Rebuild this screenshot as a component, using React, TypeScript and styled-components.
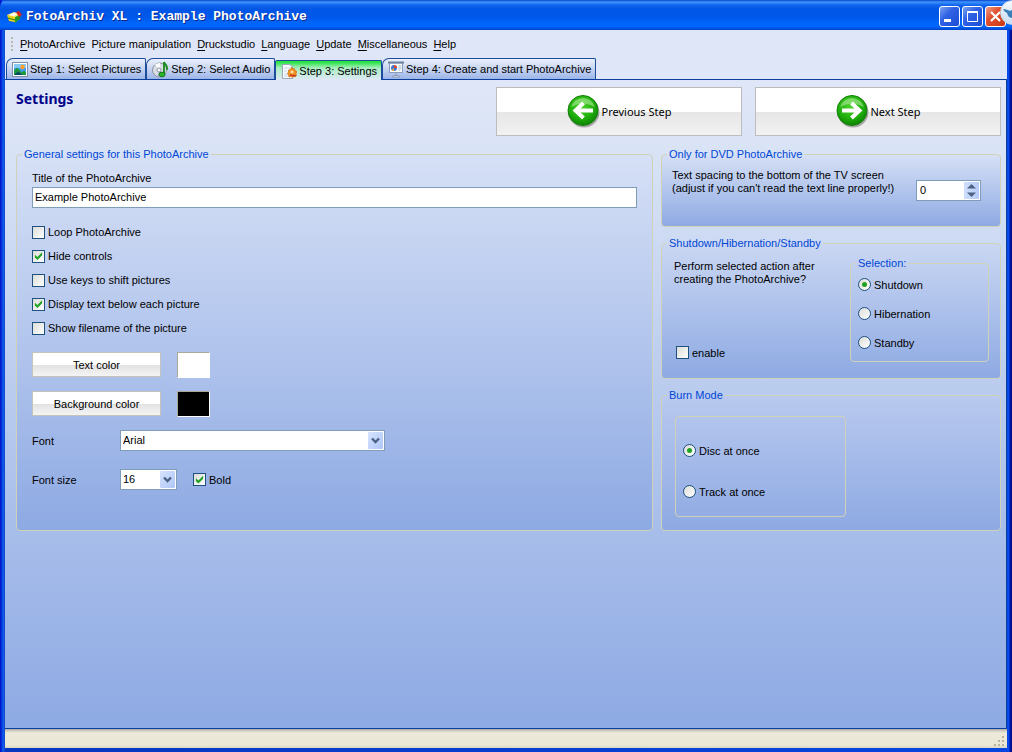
import React, { useState } from 'react';
import styled, { createGlobalStyle, css } from 'styled-components';

const Global = createGlobalStyle`
  * { box-sizing: border-box; }
  body { margin: 0; background: #0831d9; }
  body, button, input, select {
    font-family: 'Liberation Sans', Arial, sans-serif;
    font-size: 11px;
    line-height: 14px;
    color: #000;
  }
  button { padding: 0; cursor: default; }
`;

const Window = styled.div`
  display: flex;
  flex-direction: column;
  min-height: 100vh;
  padding: 0 5px 4px;
  position: relative;
  overflow: hidden;
  background: linear-gradient(90deg, #0019cf 0, #0019cf 1px, #0846e0 2px, #1560ea 4px, #0837c0 5px, #0846e0 calc(100% - 5px), #0650f0 calc(100% - 3px), #0010a0 calc(100% - 2px), #00138c 100%);
`;

const TitleBar = styled.header`
  display: flex;
  align-items: center;
  gap: 3px;
  height: 30px;
  margin: 0 -5px;
  padding: 3px 6px 0;
  border-radius: 7px 0 0 0;
  background: linear-gradient(#0842c8 0, #3f96ff 2px, #1265ee 5px, #0056e5 9px, #0058ea 17px, #0066fa 23px, #0068ff 26px, #0050dd 29px, #0640bb 30px);
`;

const Title = styled.h1`
  flex: 1;
  margin: 0;
  color: #fff;
  font: bold 13px/16px 'Liberation Mono', 'Courier New', monospace;
  text-shadow: 1px 1px 0 #0b2a8c;
`;

const Captions = styled.div`
  display: flex;
  gap: 2px;
`;

const CaptionButton = styled.button<{ $close?: boolean }>`
  width: 21px;
  height: 21px;
  border: 1px solid #fff;
  border-radius: 3px;
  background: ${p => p.$close
    ? 'linear-gradient(135deg, #f0a088, #e05030 40%, #c83810)'
    : 'linear-gradient(135deg, #7ba2f0, #2f62e4 40%, #1c4cd6)'};
  svg { display: block; }
`;

const Bubble = styled.div`
  position: absolute;
  top: 0;
  right: -13px;
  width: 25px;
  height: 25px;
  border-radius: 13px;
  border: 1px solid #c4d6ec;
  background: linear-gradient(#f6faff, #c9dcf2);
  svg { display: block; }
`;

const MenuBar = styled.nav`
  display: flex;
  align-items: center;
  gap: 6px;
  height: 28px;
  padding-left: 6px;
  background: #dfe6f7;
`;

const Grip = styled.span`
  width: 2px;
  height: 14px;
  margin-right: 1px;
  background: repeating-linear-gradient(#b8b8b0 0, #b8b8b0 2px, transparent 2px, transparent 4px);
`;

const MenuItem = styled.button`
  border: 0;
  background: none;
  white-space: nowrap;
  text-underline-offset: 2px;
`;

const TabStrip = styled.div`
  display: flex;
  align-items: flex-end;
  height: 22px;
  padding-left: 1px;
  background: #dfe6f7;
  border-bottom: 1px solid #0c3f9c;
`;

const Tab = styled.button<{ $active?: boolean }>`
  display: flex;
  align-items: center;
  gap: 2px;
  height: 21px;
  padding: 0 4px 0 5px;
  border: 1px solid #1c4c9c;
  border-bottom: 0;
  border-radius: 7px 2px 0 0;
  white-space: nowrap;
  background: linear-gradient(#eaf0fb, #c6d4f1 50%, #9cb5e8);
  ${p => p.$active && css`
    height: 20px;
    margin-bottom: -1px;
    padding: 1px 4px 0 5px;
    border-radius: 2px 2px 0 0;
    background: linear-gradient(#19e832 0, #3be455 2px, #a9eec0 7px, #dfe8f6 19px);
  `}
  svg { display: block; flex: none; }
`;

const Page = styled.main`
  flex: 1;
  padding: 7px 5px 16px 11px;
  border-right: 1px solid #0c3f9c;
  background: linear-gradient(#dfe6f7 0, #dae4f6 60px, #8eaae4 100%);
`;

const PageHead = styled.div`
  display: flex;
  align-items: flex-start;
  gap: 13px;
  margin-bottom: 11px;
`;

const Heading = styled.h2`
  flex: 1;
  margin: 0;
  padding-top: 3px;
  color: #00008b;
  font: bold 14px/18px 'Noto Sans', Tahoma, sans-serif;
`;

const StepButton = styled.button`
  display: flex;
  align-items: center;
  justify-content: center;
  gap: 2px;
  width: 246px;
  height: 49px;
  border: 1px solid #bdbdbd;
  background: linear-gradient(#fff 0, #fff 51%, #e6e6e6 52%, #f2f2f2 100%);
  font: 11px/14px 'Noto Sans', Tahoma, sans-serif;
`;

const Columns = styled.div`
  display: grid;
  grid-template-columns: minmax(0, 15fr) minmax(340px, 8fr);
  gap: 8px;
`;

const Stack = styled.div`
  display: flex;
  flex-direction: column;
  gap: 9px;
`;

const Legend = styled.legend`
  margin-left: -10px;
  padding: 0 2px;
  height: 14px;
  color: #0046d5;
`;

const Group = styled.fieldset<{ $h?: number; $top?: string }>`
  min-width: 0;
  margin: 0;
  min-height: ${p => p.$h ?? 0}px;
  padding: 0 15px;
  border: 1px solid #d0d2b8;
  border-radius: 4px;
  background: ${p => p.$top ? `linear-gradient(${p.$top}, #8eaae3)` : 'none'};
`;

const FieldLabel = styled.label`
  display: block;
  margin-top: 9px;
  padding-bottom: 1px;
  line-height: 16px;
`;

const fieldBox = css`
  height: 21px;
  border: 1px solid #7f9db9;
  border-radius: 0;
  background: #fff;
  outline: 0;
`;

const TextInput = styled.input`
  ${fieldBox}
  display: block;
  width: 100%;
  padding: 0 2px 1px;
`;

const CheckList = styled.div`
  display: flex;
  flex-direction: column;
  margin: 12px 0;
`;

const Option = styled.label<{ $row?: number }>`
  display: flex;
  align-items: center;
  gap: 3px;
  height: ${p => p.$row ?? 24}px;
  white-space: nowrap;
`;

const Check = styled.input.attrs({ type: 'checkbox' })`
  appearance: none;
  display: grid;
  place-items: center;
  width: 13px;
  height: 13px;
  margin: 0;
  border: 1px solid #1c5180;
  background: linear-gradient(135deg, #dcdcd7, #fff);
  &:checked::before {
    content: '';
    width: 9px;
    height: 9px;
    background: #21a121;
    clip-path: polygon(10% 35%, 38% 60%, 90% 8%, 90% 42%, 38% 95%, 10% 68%);
  }
`;

const Radio = styled.input.attrs({ type: 'radio' })`
  appearance: none;
  display: grid;
  place-items: center;
  width: 13px;
  height: 13px;
  margin: 0;
  border: 1px solid #1c5180;
  border-radius: 50%;
  background: linear-gradient(135deg, #dcdcd7, #fff);
  &:checked::before {
    content: '';
    width: 5px;
    height: 5px;
    border-radius: 50%;
    background: #21a121;
  }
`;

const ColorRow = styled.div`
  display: flex;
  gap: 16px;
  height: 26px;
  margin-bottom: 13px;
`;

const ColorButton = styled.button`
  width: 129px;
  height: 25px;
  border: 1px solid #c6c3bd;
  background: linear-gradient(#fff 0, #fff 50%, #e2e2e2 52%, #f4f4f4 100%);
`;

const Swatch = styled.span<{ $color: string }>`
  width: 33px;
  height: 26px;
  border: 1px solid;
  border-color: #aca899 #fff #fff #aca899;
  background: ${p => p.$color};
`;

const FormRow = styled.div`
  display: flex;
  align-items: center;
  height: 21px;
  margin-bottom: 18px;
`;

const RowLabel = styled.label`
  width: 88px;
`;

const SelectBox = styled.span<{ $w: number }>`
  position: relative;
  width: ${p => p.$w}px;
  margin-right: 16px;
  svg { position: absolute; top: 2px; right: 2px; pointer-events: none; }
`;

const Select = styled.select`
  ${fieldBox}
  appearance: none;
  display: block;
  width: 100%;
  padding: 0 20px 1px 2px;
`;

const SplitRow = styled.div`
  display: flex;
  justify-content: space-between;
`;

const Note = styled.p`
  margin: 0;
  line-height: 13px;
  white-space: nowrap;
`;

const DvdRow = styled(SplitRow)`
  padding: 8px 4px 0 0;
  margin-left: -5px;
`;

const Spinner = styled.div`
  ${fieldBox}
  display: flex;
  width: 65px;
  margin-top: 11px;
  padding: 1px;
`;

const SpinInput = styled.input`
  flex: 1;
  min-width: 0;
  padding: 0 0 1px 2px;
  border: 0;
  outline: 0;
  appearance: textfield;
  &::-webkit-inner-spin-button { appearance: none; }
`;

const SpinButtons = styled.div`
  display: flex;
  flex-direction: column;
  width: 15px;
  button {
    flex: 1;
    border: 0;
    background: linear-gradient(90deg, #cfdefd, #b5cbf8);
  }
  svg { display: block; margin: 0 auto; }
`;

const ActionColumn = styled.div`
  display: flex;
  flex-direction: column;
  justify-content: space-between;
  height: 109px;
  padding-top: 10px;
  margin-left: -3px;
  label { padding-left: 2px; }
`;

const SelectionGroup = styled(Group)`
  width: 139px;
  margin: 6px -4px 0 0;
  padding: 0 7px 4px;
  legend { margin-left: -2px; }
`;

const BurnGroup = styled(Group)`
  width: 171px;
  margin: 14px 0 0 -2px;
  padding: 13px 7px 4px;
`;

const StatusBar = styled.footer`
  display: flex;
  justify-content: flex-end;
  align-items: flex-end;
  height: 20px;
  border-top: 1px solid #0c3f9c;
  background: linear-gradient(#a9a7a6 0, #d6d3c6 2px, #ebe9d8 4px, #ebe8d6 16px, #d9d6c4 19px);
`;

const DropArrow = () => (
  <svg width="15" height="17" viewBox="0 0 15 17">
    <defs>
      <linearGradient id="drop" x1="0" y1="0" x2="1" y2="1">
        <stop offset="0" stopColor="#d6e3fe" />
        <stop offset="1" stopColor="#aec6f7" />
      </linearGradient>
    </defs>
    <rect width="15" height="17" rx="1" fill="url(#drop)" />
    <path d="M4 6.5 7.5 10 11 6.5" fill="none" stroke="#4d6185" strokeWidth="2.4" />
  </svg>
);

const AppIcon = () => (
  <svg width="17" height="16" viewBox="0 0 17 16">
    <path d="M1 6 8 3l6 2-5 4z" fill="#fff27a" />
    <path d="M1 6l8 2v5l-6-1z" fill="#f3cf13" />
    <path d="M9 8l6-3-1 5-5 4z" fill="#28a52c" />
    <path d="M10 3l3-1 3 4-3 2z" fill="#d9251b" />
    <path d="M3 6l5-2 3 1-3 2z" fill="#fff" />
    <path d="M2 9l7 2 5-3" stroke="#168320" fill="none" />
  </svg>
);

const PictureIcon = () => (
  <svg width="16" height="16" viewBox="0 0 16 16">
    <rect x=".5" y="1.5" width="15" height="14" fill="#fff" stroke="#7f90a8" />
    <rect x="2" y="3" width="12" height="11" fill="#3f9fee" />
    <path d="M2 3h12v4H2z" fill="#86c8fa" />
    <circle cx="10.5" cy="6" r="2.2" fill="#ff9d2b" />
    <path d="M2 9.500l3-3 5 5 2-2 2 2v2.500H2z" fill="#1c9a3a" />
    <path d="M2 14l4-3.500 5 3.500z" fill="#0b4c66" />
  </svg>
);

const AudioIcon = () => (
  <svg width="17" height="17" viewBox="0 0 17 17">
    <circle cx="7.5" cy="9" r="7" fill="#d9dde4" stroke="#8c939f" />
    <path d="M7.5 9 3 3.6A7 7 0 0 1 8 2z" fill="#fff" />
    <path d="M7.5 9l3 6.2a7 7 0 0 1-5 .3z" fill="#b6a9d8" />
    <circle cx="7" cy="9" r="2" fill="#fff" stroke="#8c939f" />
    <path d="M12 1v12" stroke="#128a17" strokeWidth="1.8" />
    <path d="M12 1c1 2.500 4 3 3 8" fill="none" stroke="#128a17" strokeWidth="1.600" />
    <ellipse cx="10" cy="13.5" rx="3" ry="2.300" fill="#2fb52f" stroke="#0d7a12" />
  </svg>
);

const SettingsIcon = () => (
  <svg width="16" height="16" viewBox="0 0 16 16">
    <path d="M1.500 1.500h7l3 2v12h-10z" fill="#f8fbff" stroke="#9aa7ba" />
    <path d="M3 5h6M3 8h3M3 11h4M3 13h6" stroke="#c5d5ec" />
    <path d="M10.500 4l1 2 2-.5.500 2 2 1-1 2 .5 2-2 .5-1.500 1.500-2-1-2 .5-.5-2-1-1.500 1-1.500V7l2-.5z" fill="#f2931e" stroke="#c8650c" strokeWidth=".6" />
    <circle cx="11" cy="9" r="1.500" fill="#fbe0b0" />
    <path d="M9 12l6 1" stroke="#c7361a" strokeWidth="1.300" />
  </svg>
);

const PresentIcon = () => (
  <svg width="16" height="17" viewBox="0 0 16 17">
    <rect x="1.500" y="2" width="13" height="9.500" fill="#fdfeff" stroke="#8b9db8" />
    <path d="M0 1.500h16" stroke="#6e83a5" strokeWidth="2" />
    <circle cx="6" cy="7" r="3" fill="#3f78d8" />
    <path d="M6 7V4a3 3 0 0 1 3 3z" fill="#e4472f" />
    <path d="M6 7l-2.500 2A3 3 0 0 0 6 10z" fill="#f0a92c" />
    <path d="M10.500 5h3M10.500 7h3M10.500 9h2" stroke="#9fb0c8" />
    <path d="M8 12v3M4 16l2-1.500h4l2 1.500z" stroke="#8b9db8" fill="#e6ecf5" />
  </svg>
);

const ArrowBall = ({ back }: { back?: boolean }) => (
  <svg width="33" height="34" viewBox="0 0 33 34">
    <defs>
      <radialGradient id={back ? 'ballBack' : 'ballNext'} cx=".45" cy=".35" r=".7">
        <stop offset="0" stopColor="#4fd32e" />
        <stop offset=".6" stopColor="#1eae0c" />
        <stop offset="1" stopColor="#0c7a04" />
      </radialGradient>
    </defs>
    <circle cx="17" cy="17" r="15.500" fill="#555" opacity=".45" />
    <circle cx="16" cy="15.500" r="15" fill={back ? 'url(#ballBack)' : 'url(#ballNext)'} stroke="#168009" />
    <path d="M4 12a12.500 12.500 0 0 1 24 0Q16 5 4 12z" fill="#d5f8c4" opacity=".45" />
    <path
      d={back ? 'M26 15.500H9M16.500 8l-8 7.500 8 7.500' : 'M6 15.500h17M15.500 8l8 7.500-8 7.500'}
      fill="none" stroke="#fff" strokeWidth="4"
    />
  </svg>
);

const menus: [string, string, string][] = [
  ['', 'P', 'hotoArchive'], ['P', 'i', 'cture manipulation'], ['', 'D', 'ruckstudio'],
  ['', 'L', 'anguage'], ['', 'U', 'pdate'], ['', 'M', 'iscellaneous'], ['', 'H', 'elp'],
];

const tabs = [
  { text: 'Step 1: Select Pictures', icon: <PictureIcon /> },
  { text: 'Step 2: Select Audio', icon: <AudioIcon /> },
  { text: 'Step 3: Settings', icon: <SettingsIcon /> },
  { text: 'Step 4: Create and start PhotoArchive', icon: <PresentIcon /> },
];

const playback: [string, boolean][] = [
  ['Loop PhotoArchive', false], ['Hide controls', true], ['Use keys to shift pictures', false],
  ['Display text below each picture', true], ['Show filename of the picture', false],
];

export default function App() {
  const [tab, setTab] = useState(2);
  const [spacing, setSpacing] = useState(0);

  return (
    <>
      <Global />
      <Window>
        <TitleBar>
          <AppIcon />
          <Title>FotoArchiv XL : Example PhotoArchive</Title>
          <Captions>
            <CaptionButton aria-label="Minimize">
              <svg width="19" height="19"><rect x="4" y="12" width="7" height="3" fill="#fff" /></svg>
            </CaptionButton>
            <CaptionButton aria-label="Maximize">
              <svg width="19" height="19"><path d="M4.500 4v10.500h10V4M4 5.500h11" fill="none" stroke="#fff" /><path d="M4 5h11" stroke="#fff" strokeWidth="2" /></svg>
            </CaptionButton>
            <CaptionButton $close aria-label="Close">
              <svg width="19" height="19"><path d="M5 5l9 9M14 5l-9 9" stroke="#fff" strokeWidth="2.200" /></svg>
            </CaptionButton>
          </Captions>
        </TitleBar>
        <Bubble>
          <svg width="23" height="23" viewBox="0 0 23 23">
            <path d="M2 8c3 0 5 1 7 2l3-2v9c-4 0-5-2-6-5-2-1-3-2-4-4z" fill="#3b7fb8" />
          </svg>
        </Bubble>

        <MenuBar>
          <Grip />
          {menus.map(([pre, key, post]) => (
            <MenuItem key={pre + key + post}>{pre}<u>{key}</u>{post}</MenuItem>
          ))}
        </MenuBar>

        <TabStrip role="tablist">
          {tabs.map((t, i) => (
            <Tab key={t.text} role="tab" aria-selected={i === tab} $active={i === tab} onClick={() => setTab(i)}>
              {t.icon}{t.text}
            </Tab>
          ))}
        </TabStrip>

        <Page>
          <PageHead>
            <Heading>Settings</Heading>
            <StepButton><ArrowBall back />Previous Step</StepButton>
            <StepButton><ArrowBall />Next Step</StepButton>
          </PageHead>

          <Columns>
            <Group $top="#d6e0f6">
              <Legend>General settings for this PhotoArchive</Legend>
              <FieldLabel htmlFor="title">Title of the PhotoArchive</FieldLabel>
              <TextInput id="title" defaultValue="Example PhotoArchive" />
              <CheckList>
                {playback.map(([text, on]) => (
                  <Option key={text}><Check defaultChecked={on} />{text}</Option>
                ))}
              </CheckList>
              <ColorRow><ColorButton>Text color</ColorButton><Swatch $color="#fff" /></ColorRow>
              <ColorRow><ColorButton>Background color</ColorButton><Swatch $color="#000" /></ColorRow>
              <FormRow>
                <RowLabel htmlFor="font">Font</RowLabel>
                <SelectBox $w={265}>
                  <Select id="font"><option>Arial</option></Select>
                  <DropArrow />
                </SelectBox>
              </FormRow>
              <FormRow>
                <RowLabel htmlFor="size">Font size</RowLabel>
                <SelectBox $w={57}>
                  <Select id="size"><option>16</option></Select>
                  <DropArrow />
                </SelectBox>
                <Option><Check defaultChecked />Bold</Option>
              </FormRow>
            </Group>

            <Stack>
              <Group $h={80} $top="#d6e0f6">
                <Legend>Only for DVD PhotoArchive</Legend>
                <DvdRow>
                  <Note as="label" htmlFor="spacing">
                    Text spacing to the bottom of the TV screen<br />
                    (adjust if you can't read the text line properly!)
                  </Note>
                  <Spinner>
                    <SpinInput id="spacing" type="number" value={spacing} onChange={e => setSpacing(Number(e.target.value))} />
                    <SpinButtons>
                      <button aria-label="Increase" onClick={() => setSpacing(spacing + 1)}>
                        <svg width="9" height="6"><path d="M0 5.500 4.500 1 9 5.500z" fill="#4d6185" /></svg>
                      </button>
                      <button aria-label="Decrease" onClick={() => setSpacing(Math.max(0, spacing - 1))}>
                        <svg width="9" height="6"><path d="M0 .5 4.500 5 9 .5z" fill="#4d6185" /></svg>
                      </button>
                    </SpinButtons>
                  </Spinner>
                </DvdRow>
              </Group>

              <Group $h={143} $top="#cad7f3">
                <Legend>Shutdown/Hibernation/Standby</Legend>
                <SplitRow>
                  <ActionColumn>
                    <Note>Perform selected action after<br />creating the PhotoArchive?</Note>
                    <Option $row={13}><Check />enable</Option>
                  </ActionColumn>
                  <SelectionGroup>
                    <Legend>Selection:</Legend>
                    {['Shutdown', 'Hibernation', 'Standby'].map((text, i) => (
                      <Option key={text} $row={29}><Radio name="action" defaultChecked={i === 0} />{text}</Option>
                    ))}
                  </SelectionGroup>
                </SplitRow>
              </Group>

              <Group $h={143} $top="#b9c9ef">
                <Legend>Burn Mode</Legend>
                <BurnGroup aria-label="Burn Mode">
                  {['Disc at once', 'Track at once'].map((text, i) => (
                    <Option key={text} $row={41}><Radio name="burn" defaultChecked={i === 0} />{text}</Option>
                  ))}
                </BurnGroup>
              </Group>
            </Stack>
          </Columns>
        </Page>

        <StatusBar>
          <svg width="14" height="14" viewBox="0 0 14 14">
            <path d="M9 2h2v2H9zM5 6h2v2H5zM9 6h2v2H9zM1 10h2v2H1zM5 10h2v2H5zM9 10h2v2H9z" fill="#b5b29e" />
          </svg>
        </StatusBar>
      </Window>
    </>
  );
}
